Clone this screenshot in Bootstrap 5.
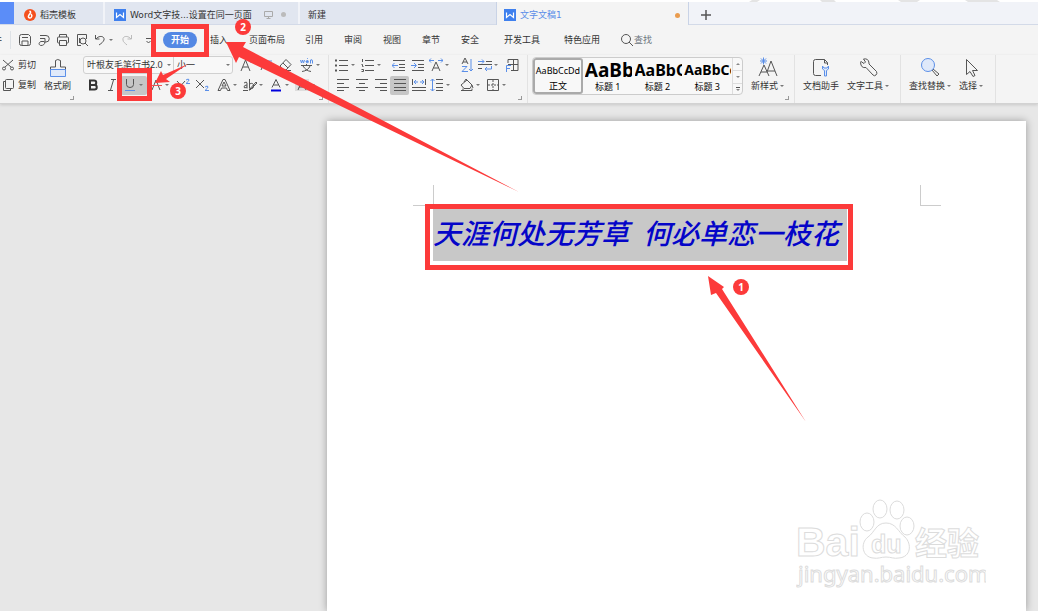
<!DOCTYPE html>
<html lang="zh-CN">
<head>
<meta charset="utf-8">
<meta name="viewport" content="width=device-width, initial-scale=1">
<title>文字文稿1</title>
<link href="https://cdn.jsdelivr.net/npm/bootstrap@5.3.0/dist/css/bootstrap.min.css" rel="stylesheet">
<style>
:root{--ink:#555;--blue:#5b8fe8;--red:#fc3a3a}
body{font:9px/12px "Noto Sans","Noto Sans CJK SC",sans-serif;color:#333;background:#e7e7e7;overflow-x:hidden}
a{color:inherit;text-decoration:none}
button{font:inherit;color:inherit;background:none;border:0;padding:0;white-space:nowrap}
svg{flex:none}
.tabbar{height:25px;border-top:2px solid #fff;background:#f1f3f8;border-bottom:1px solid #d3dae8;font-family:"DejaVu Sans","Noto Sans CJK SC",sans-serif}
.home-tab{width:14px;background:#5b8df8}
.doc-tab{height:22px;background:#e1e6f0;border-right:2px solid #f1f3f8;padding-left:10px;padding-top:3px;gap:4px}
.tab-tpl{width:91px}.tab-word{width:195px;padding-left:9px}.tab-new{width:196px;padding-left:8px;border-right:0}
.tab-cur{width:193px;height:23px;margin-bottom:-1px;background:#f4f4f4;border:1px solid #c9d3e6;border-width:0 1px;padding-left:7px;color:#5b8de8}
.dot{width:5px;height:5px;border-radius:50%}
.menubar{height:30px;background:#f4f4f4}
.menubar svg{width:14px;height:14px}
.quick{width:155px;flex:none}
.file-cut{width:5px;overflow:hidden;justify-content:flex-end;white-space:nowrap}
.mitem{min-width:19px}
.menu-links{gap:20px}
.pill-on{background:#5388e4;color:#fff;font-weight:700;border-radius:8px;width:34px;height:16px}
.insert-item{margin-left:-7px}
.ribbon{height:49px;background:#f4f4f4;border-bottom:1px solid #d2d2d2;box-shadow:0 1px 3px #0002}
.grp{position:relative;flex:none;border-right:1px solid #e2e2e2}
.corner::after{content:"";position:absolute;right:5px;bottom:3px;width:4px;height:4px;border:1px solid #999;border-width:0 1px 1px 0}
.g-clip{width:83px;border:0}.g-clip.corner::after{right:9px}
.g-font{width:246px}.g-para{width:199px}.g-style{width:267px}.g-tools{width:106px}.g-find{width:95px}
.rrow{height:20px;display:flex;align-items:center}
.ib{width:19px;height:19px;display:flex;align-items:center;justify-content:center;border-radius:2px;flex:none}
.dd{width:26px;justify-content:flex-start;padding-left:2px}
.ib svg{width:14px;height:14px}
.dd::after,.caret::after{content:"";border:2px solid transparent;border-top-color:#777;border-bottom:0;margin-left:2px;flex:none}
.on{background:#c6c6c6}
svg.ln{fill:none;stroke:var(--ink);stroke-width:1}
.b{stroke:var(--blue)}
svg text{stroke:none;fill:var(--ink)}
.combo{height:18px;border:1px solid #d0d0d0;background:#f8f8f8;display:flex;align-items:center}
.combo input{border:0;background:none;padding:0 0 0 3px;width:100%;min-width:0;font:inherit;color:inherit}
.combo::after{content:"";border:2px solid transparent;border-top-color:#777;border-bottom:0;margin:0 2px;flex:none}
.c-font{width:91px;border-radius:3px 0 0 3px}.c-size{width:60px;margin-left:-1px;border-radius:0 3px 3px 0}
.big{display:flex;flex-direction:column;align-items:center;height:41px;padding-top:2px}
.big svg{width:22px;height:22px}
.big span{display:flex;align-items:center;margin-top:1px}
.gallery{width:211px;height:38px;border:1px solid #ccc;border-radius:4px;background:#f8f8f8;overflow:hidden;margin-top:2px}
.sty{width:50px;height:36px;overflow:hidden;display:flex;flex-direction:column;color:#000;text-align:center}
.sty b,.sty i{font-style:normal;display:block;height:23px;line-height:24px;overflow:hidden;width:47px;text-align:left;margin-left:2px}
.sty.sel{border:2px solid #aaa;border-radius:3px;width:50px}
.sty.sel i{height:21px;line-height:21px;margin-left:0;width:46px;text-align:center;font-size:9px}
.h-a{font-size:19px}.h-b{font-size:16px}.h-c{font-size:14px}
.scroller{width:10px;border-left:1px solid #ddd}
.desk{padding:17px 12px 0 327px}
.sheet{background:#fff;box-shadow:0 0 8px #0005;padding-top:64px;position:relative}
.marks{padding:0 85px 0 86px;height:21px}
.mk{width:21px;height:21px;border:solid #ccc;border-width:0 0 1px 1px}
.mk.l{border-width:0 1px 1px 0}
.verse{margin:3px 0 0 106px;background:#c8c8c8;width:414px;height:52px;color:#0505c8;font:italic 500 28px/46px "Noto Sans CJK SC",sans-serif;gap:14px;white-space:nowrap}
.wmark{position:absolute;right:40px;bottom:14px}
.wmark *{fill:#fff;stroke:#dcdcdc;stroke-width:1}
.notes{position:absolute;left:0;top:0;pointer-events:none;overflow:visible}
.notes text{fill:#fff;font:700 10px "Noto Sans",sans-serif;text-anchor:middle}
</style>
</head>
<body class="position-relative d-flex flex-column min-vh-100">
<header>
<nav class="tabbar d-flex align-items-start" aria-label="文档">
  <div class="home-tab align-self-stretch"></div>
  <a href="#" class="doc-tab tab-tpl d-flex align-items-center"><svg width="12" height="12" viewBox="0 0 12 12"><circle cx="6" cy="6" r="6" fill="#f4501e"/><path d="M5.500 2c2 1 1 2-.5 4s0 3 1 3 3-2 1-4" stroke="#fff" stroke-width="1.500" fill="none"/></svg>稻壳模板</a>
  <a href="#" class="doc-tab tab-word d-flex align-items-center"><svg width="12" height="12" viewBox="0 0 12 12"><path d="M0 0h12v12H0z" fill="#3f80ee"/><path d="M2.500 3.500v5l3.500-3 3.500 3v-5" stroke="#fff" stroke-width="1.200" fill="none"/></svg><span>Word文字技...设置在同一页面</span><svg class="ln ms-2" width="9" height="9" viewBox="0 0 9 9" style="stroke:#aaa"><path d="M.5 1.500h8v5h-8zM4.500 6v2.500M2.500 8.500h4"/></svg><span class="dot ms-1" style="background:#bbb"></span></a>
  <a href="#" class="doc-tab tab-new d-flex align-items-center">新建</a>
  <a href="#" class="doc-tab tab-cur d-flex align-items-center"><svg width="12" height="12" viewBox="0 0 12 12"><path d="M0 0h12v12H0z" fill="#3f80ee"/><path d="M2.500 3.500v5l3.500-3 3.500 3v-5" stroke="#fff" stroke-width="1.200" fill="none"/></svg>文字文稿1<span class="dot ms-auto me-2" style="background:#ea9c4e"></span></a>
  <button class="p-1 ms-1 mt-1 d-flex" aria-label="新建标签"><svg class="ln ms-1" width="10" height="10" viewBox="0 0 10 10"><path d="M5 0v10M0 5h10" stroke-width="1.500"/></svg></button>
</nav>
<nav class="menubar d-flex align-items-center" aria-label="菜单">
  <div class="quick d-flex align-items-center">
    <a href="#" class="file-cut d-flex">文件</a>
    <div class="border-start ms-2 me-1" style="height:18px"></div>
    <button class="ib" aria-label="保存"><svg class="ln" viewBox="0 0 14 14"><path d="M3.500 1.500h7l2 2v7q0 2-2 2h-7q-2 0-2-2v-7q0-2 2-2zM4 4.500h6M4 12.500V8h6v4.500"/></svg></button>
    <button class="ib" aria-label="输出为PDF"><svg class="ln" viewBox="0 0 14 14"><path d="M3 2.500h6a3 3 0 010 6.500H7M3 5.500h5v3c0 3-2 4-4 4s-3-3 0-4h3"/></svg></button>
    <button class="ib" aria-label="打印"><svg class="ln" viewBox="0 0 14 14"><path d="M3.500 4V1.500h7V4M3.500 10h-1q-1 0-1-1V5q0-1 1-1h9q1 0 1 1v4q0 1-1 1h-1M3.500 7.500h7v5h-7z"/></svg></button>
    <button class="ib" aria-label="打印预览"><svg class="ln" viewBox="0 0 14 14"><path d="M6 12.500H2.500v-11h9V6"/><circle cx="8" cy="8" r="3"/><path d="M10 10l3 3M4.500 5v5"/></svg></button>
    <button class="ib dd" aria-label="撤销"><svg class="ln" viewBox="0 0 14 14"><path d="M2.500 2v4h4M3 6c3-4 9-3 8 1-1 2-2 3-5 5"/></svg></button>
    <button class="ib" aria-label="恢复"><svg class="ln" viewBox="0 0 14 14" style="stroke:#bbb"><path d="M11.500 2v4h-4M11 6C8 2 2 3 3 7c0 2 2 3 4 5"/></svg></button>
    <button class="ib" aria-label="更多"><svg class="ln" viewBox="0 0 14 14"><path d="M7 5.500h5M7.500 8l2 2 2-2"/></svg></button>
  </div>
  <div class="menu-links d-flex align-items-center">
    <a href="#" class="pill-on d-flex align-items-center justify-content-center ms-2">开始</a>
    <a href="#" class="mitem insert-item">插入</a>
    <a href="#" class="mitem">页面布局</a><a href="#" class="mitem">引用</a><a href="#" class="mitem">审阅</a><a href="#" class="mitem">视图</a><a href="#" class="mitem">章节</a><a href="#" class="mitem">安全</a>
    <a href="#" class="ps-1">开发工具</a><a href="#" class="ps-1">特色应用</a>
    <a href="#" class="d-flex align-items-center text-secondary"><svg class="ln" viewBox="0 0 14 14"><circle cx="6" cy="6" r="4.500"/><path d="M9 9l4 4"/></svg>查找</a>
  </div>
</nav>
<section class="ribbon d-flex" aria-label="功能区">
  <div class="grp g-clip corner d-flex">
    <div>
      <div class="rrow"><button class="d-flex align-items-center gap-1"><svg class="ln ms-0" width="14" height="12" viewBox="0 0 14 12"><path d="M3 1l8 7M13 1L5 8"/><circle cx="4" cy="9.500" r="1.500"/><circle cx="12" cy="9.500" r="1.500"/></svg>剪切</button></div>
      <div class="rrow"><button class="d-flex align-items-center gap-1"><svg class="ln ms-0" width="14" height="12" viewBox="0 0 14 12"><path d="M6.500.5h6q1 0 1 1v7q0 1-1 1h-6q-1 0-1-1v-7q0-1 1-1zM5 2.500H3.500v9h7V10"/></svg>复制</button></div>
    </div>
    <button class="big ms-2"><svg class="ln" viewBox="0 0 22 22"><path d="M3.500 13v-3h5V3.500q2-2 5 0V10h5v3"/><path class="b" d="M3.500 12.500h15v7h-15z" fill="#dfe9fa"/></svg><span>格式刷</span></button>
  </div>
  <div class="grp g-font corner">
    <div class="rrow">
      <label class="combo c-font"><input aria-label="字体" value="叶根友毛笔行书2.0"></label>
      <label class="combo c-size"><input aria-label="字号" value="小一"></label>
      <button class="ib ms-1" aria-label="增大字号"><svg class="ln" viewBox="0 0 14 14"><path d="M1 13L5.500 2 10 13M3 9h5"/><path class="b" d="M9 3h4M11 1v4"/></svg></button>
      <button class="ib" aria-label="减小字号"><svg class="ln" viewBox="0 0 14 14"><path d="M2 12L6 3l4 9M3.500 9h5"/><path class="b" d="M9 3h4"/></svg></button>
      <button class="ib" aria-label="清除格式"><svg class="ln" viewBox="0 0 14 14"><path d="M2 8l6-6.500 5 5L8 12H5.500zM5 5l5 5M8 12.500h5"/></svg></button>
      <button class="ib dd ms-1" aria-label="拼音指南"><svg class="ln" viewBox="0 0 14 14"><path class="b" d="M.5 2l1 3 1-3 1 3 1-3M6 3.500h2.500q-1-3-2.500 0 0 2 2.500 1M7 .500l1-.5M10.500 5.500V2q2-1 2 1v2.500"/><path d="M1 7.500h11M6.500 6v1.500M3 8c2 3 4 5 8 5.500M10 8c-1 3-4 5-8 5.500"/></svg></button>
    </div>
    <div class="rrow">
      <button class="ib" aria-label="加粗"><svg class="ln" viewBox="0 0 14 14"><path stroke="#333" stroke-width="2" d="M4 2.500h4a2.200 2.200 0 010 4.500H4zM4 7h4.500a2.200 2.200 0 010 4.500H4z"/></svg></button>
      <button class="ib" aria-label="倾斜"><svg class="ln" viewBox="0 0 14 14"><path d="M6 1.500h5M3 12.500h5M8.500 2l-3 10"/></svg></button>
      <button class="ib dd on" aria-label="下划线"><svg class="ln" viewBox="0 0 14 14"><path d="M3.500 1v5.500q0 3 3.500 3t3.500-3V1"/><path class="b" d="M2 12.500h10"/></svg></button>
      <button class="ib dd" aria-label="删除线"><svg class="ln" viewBox="0 0 14 14"><path d="M3 12L7 2l4 10"/><path stroke="#e55" d="M0 7.500h13"/></svg></button>
      <button class="ib" aria-label="上标"><svg class="ln" viewBox="0 0 14 14"><path d="M1 3l8 9M9 3l-8 9"/><path class="b" d="M10 2q3-2 3 0 0 1-3 3.500h4"/></svg></button>
      <button class="ib" aria-label="下标"><svg class="ln" viewBox="0 0 14 14"><path d="M1 2l8 8M9 2l-8 8"/><path class="b" d="M10 9q3-2 3 0 0 1-3 3.500h4"/></svg></button>
      <button class="ib dd ms-1" aria-label="文字效果"><svg class="ln" viewBox="0 0 14 14"><path d="M1 12.500l5-11h2l5 11h-2.500l-1-2.500h-5l-1 2.500zM5 8h4L7 4z"/></svg></button>
      <button class="ib dd" aria-label="突出显示"><svg class="ln" viewBox="0 0 14 14"><path d="M1 5q3-2 3 0v5.500M4 7Q1 7 1 9t3 0M6.500 1v9.500M6.500 6q4-2 4 2t-4 2M6 12l7-8 1 1-7 7zM0 12.500h5"/></svg></button>
      <button class="ib dd" aria-label="字体颜色"><svg class="ln" viewBox="0 0 14 14"><path d="M3 9.500l4-8 4 8M4.500 7h5"/><path stroke="#00d" stroke-width="2" d="M2 12.500h10"/></svg></button>
      <button class="ib dd" aria-label="底纹"><svg class="ln" viewBox="0 0 14 14"><path fill="#ddd" stroke="none" d="M0 1h14v12H0z"/><path d="M3 12L7 2l4 10M4 9h6"/></svg></button>
    </div>
  </div>
  <div class="grp g-para corner px-1">
    <div class="rrow">
      <button class="ib dd" aria-label="项目符号"><svg class="ln" viewBox="0 0 14 14"><path d="M4 2.500h9M4 7.500h9M4 12.500h9"/><path stroke-width="2" d="M0 2.500h2M0 7.500h2M0 12.500h2"/></svg></button>
      <button class="ib dd" aria-label="编号"><svg class="ln" viewBox="0 0 14 14"><path d="M4 2.500h9M4 7.500h9M4 12.500h9M1.500 1v3M.5 6.500h1v2h1M.5 11.500h2v2h-2"/></svg></button>
      <button class="ib ms-1" aria-label="减少缩进"><svg class="ln" viewBox="0 0 14 14"><path d="M1 2.500h12M7 6.500h6M7 9.500h6M1 12.500h12"/><path class="b" d="M0 7.500h6M2.500 5L0 7.500 2.500 10"/></svg></button>
      <button class="ib" aria-label="增加缩进"><svg class="ln" viewBox="0 0 14 14"><path d="M1 2.500h12M7 6.500h6M7 9.500h6M1 12.500h12"/><path class="b" d="M0 7.500h5M3 5l2.500 2.500L3 10"/></svg></button>
      <button class="ib dd" aria-label="中文版式"><svg class="ln" viewBox="0 0 14 14"><path d="M3 13L7 4l4 9M4.500 10h5"/><path class="b" d="M0 2.500h5M2 .5l-2 2 2 2M9 2.500h5M12 .5l2 2-2 2"/></svg></button>
      <button class="ib ms-1" aria-label="排序"><svg class="ln" viewBox="0 0 14 14"><path d="M2 6l3-6 3 6M3 4h4"/><path class="b" d="M2 8.500h5L2 13.500h6M11 1v12M9 11l2 2 2-2"/></svg></button>
      <button class="ib dd" aria-label="段落标记"><svg class="ln" viewBox="0 0 14 14"><path d="M8 3.500h6M0 6.500h14M0 10.500h4"/><path class="b" d="M0 3.500h6M4 1.500l2 2-2 2M13.500 8v3H7M9 9l-2 2 2 2"/></svg></button>
      <button class="ib" aria-label="制表位"><svg class="ln" viewBox="0 0 14 14"><path d="M3 5V1.500h10v11H6M8.500 1.500v11M3 6.500h10"/><path class="b" d="M1.500 14V7.500H6M1.500 10.500H5"/></svg></button>
    </div>
    <div class="rrow">
      <button class="ib" aria-label="左对齐"><svg class="ln" viewBox="0 0 14 14"><path d="M1 1.500h12M1 5.500h7M1 9.500h12M1 12.500h7"/></svg></button>
      <button class="ib" aria-label="居中"><svg class="ln" viewBox="0 0 14 14"><path d="M1 1.500h12M4 5.500h6M1 9.500h12M4 12.500h6"/></svg></button>
      <button class="ib" aria-label="右对齐"><svg class="ln" viewBox="0 0 14 14"><path d="M1 1.500h12M6 5.500h7M1 9.500h12M6 12.500h7"/></svg></button>
      <button class="ib on" aria-label="两端对齐"><svg class="ln" viewBox="0 0 14 14"><path d="M1 1.500h12M1 5.500h12M1 9.500h12M1 12.500h12"/></svg></button>
      <button class="ib" aria-label="分散对齐"><svg class="ln" viewBox="0 0 14 14"><path d="M.5 1v6M13.500 1v6M0 9.500h14M0 12.500h14"/><path class="b" d="M2 4h4M4 2L2 4l2 2M8 4h4M10 2l2 2-2 2"/></svg></button>
      <button class="ib dd" aria-label="行距"><svg class="ln" viewBox="0 0 14 14"><path d="M6 1.500h7M6 5.500h7M6 9.500h7M6 12.500h7"/><path class="b" d="M2.500 1v12M.5 3l2-2 2 2M.5 11l2 2 2-2"/></svg></button>
      <button class="ib dd ms-1" aria-label="填充"><svg class="ln" viewBox="0 0 14 14"><path d="M1 7l6-5 5 5-2 3.500H4zM4 4l2-3 2 2M3 12.500h9v-2M1 12.500h2v-2M12 7l1 3"/></svg></button>
      <button class="ib dd" aria-label="边框"><svg class="ln" viewBox="0 0 14 14"><path d="M1.500 1.500h11v11h-11z"/><path stroke-dasharray="2 1" d="M7 2v10M2 7h10"/></svg></button>
    </div>
  </div>
  <div class="grp g-style corner d-flex ps-1">
    <div class="gallery d-flex">
      <button class="sty sel"><i>AaBbCcDd</i><span>正文</span></button>
      <button class="sty"><b class="h-a">AaBb</b><span>标题 1</span></button>
      <button class="sty"><b class="h-b">AaBbC</b><span>标题 2</span></button>
      <button class="sty"><b class="h-c">AaBbCc</b><span>标题 3</span></button>
      <div class="scroller"><svg class="ln" width="9" height="36" viewBox="0 0 9 36"><path d="M0 12.500h9M0 25.500h9" stroke="#ddd"/><path fill="#888" stroke="none" d="M3 7h4L5 5zM3 18h4l-2 2zM3 31h4l-2 2z"/><path d="M3 29.500h4"/></svg></div>
    </div>
    <button class="big ms-2"><svg class="ln" viewBox="0 0 22 22"><path d="M2 19l5-11 5 11M4 15h6M10 15l4-11 6 15M11 14h7"/><path class="b" d="M3 4h7M6.500.5v7M4 1.500l5 5M9 1.500l-5 5"/></svg><span class="caret">新样式</span></button>
  </div>
  <div class="grp g-tools d-flex gap-2 ps-2">
    <button class="big"><svg class="ln" viewBox="0 0 22 22"><path d="M11 18.500H5.500q-2 0-2-2v-12q0-2 2-2h9l3 3V8M14.500 2.500V6h3"/><path class="b" fill="#dfe9fa" d="M12.500 9v3l2 1.500V19h2v-5.500l2-1.500V9l-1.500 2h-3z"/></svg><span>文档助手</span></button>
    <button class="big"><svg class="ln" viewBox="0 0 22 22"><path d="M3.500 5.500q0-1 .5-1l3 2 1.500-1.500-2-3q5-1 5.500 4v1l7.500 7.500q1 2-.500 3.500t-3 0L9 10.500q-5 1-5.500-5z"/></svg><span class="caret">文字工具</span></button>
  </div>
  <div class="grp g-find d-flex gap-2 ps-2">
    <button class="big"><svg class="ln" viewBox="0 0 22 22"><path d="M13 13l5 6 2-2-6-5"/><circle class="b" cx="9" cy="8" r="6.500" fill="#dfe9fa"/></svg><span class="caret">查找替换</span></button>
    <button class="big"><svg class="ln" viewBox="0 0 22 22"><path d="M6.500 2.500v15l3.500-3 3 5 2-1-2.500-5h5z"/></svg><span class="caret">选择</span></button>
  </div>
</section>
</header>
<main class="desk d-flex flex-grow-1">
  <article class="sheet flex-grow-1">
    <div class="marks d-flex justify-content-between"><div class="mk l"></div><div class="mk"></div></div>
    <div class="verse d-flex"><span>天涯何处无芳草</span><span>何必单恋一枝花</span></div>
    <svg class="wmark" width="190" height="98" viewBox="0 0 190 98">
      <text x="0" y="57" font-family="Liberation Sans" font-weight="700" font-size="41">Bai</text>
      <ellipse cx="71" cy="23" rx="7" ry="9"/><ellipse cx="84" cy="10" rx="7" ry="9"/><ellipse cx="101" cy="11" rx="7" ry="9"/><ellipse cx="111" cy="27" rx="7" ry="9"/>
      <path d="M90 24c-10 0-11 9-18 14-8 6-6 20 5 21 5 1 8-1 13-1s8 2 13 1c12-1 13-14 6-21-7-5-9-14-19-14z"/>
      <text x="75" y="54" font-family="Liberation Sans" font-weight="700" font-size="25">du</text>
      <text x="119" y="56" font-family="Noto Sans CJK SC" font-weight="700" font-size="32">经验</text>
      <text x="2" y="83" font-family="Noto Sans" font-weight="400" font-size="22">jingyan.baidu.com</text>
    </svg>
  </article>
</main>
<svg class="notes" width="1" height="1">
  <g fill="#e4e4e4"><path d="M752 0h8l-3 2h-8zM820 0h14l2 2h-14zM898 0h22l-3 2h-16zM965 0h32l3 2h-32z"/></g>
  <g fill="none" stroke="#fc3a3a" stroke-width="5"><path d="M153.500 26.500h53v28h-53zM119.500 70.500h30v28h-30zM427.500 206.500h423v61h-423z"/></g>
  <g fill="#fc3a3a">
    <path d="M226 42l20 0-3 5 276 145-280-135-3 6z"/>
    <path d="M708 276l16 11-2 2 84 133-90-129-5 2z"/>
    <path d="M155 83l6-12 2 4 25-11-22 15 4 3z"/>
    <circle cx="243" cy="27" r="8"/><circle cx="178" cy="91" r="8"/><circle cx="741" cy="287" r="8"/>
  </g>
  <text x="243" y="31">2</text><text x="178" y="95">3</text><text x="741" y="291">1</text>
</svg>
<script src="https://cdn.jsdelivr.net/npm/bootstrap@5.3.0/dist/js/bootstrap.bundle.min.js"></script>
</body>
</html>
